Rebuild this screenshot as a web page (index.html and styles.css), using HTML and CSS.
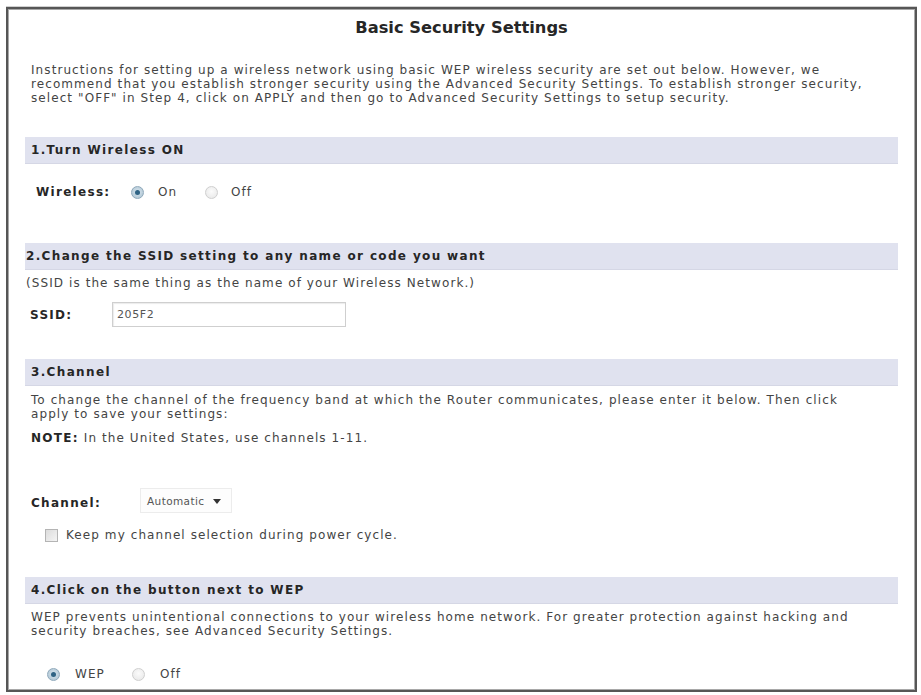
FILE: index.html
```html
<!DOCTYPE html>
<html lang="en">
<head>
<meta charset="utf-8">
<title>Basic Security Settings</title>
<link rel="stylesheet" href="styles.css">
</head>
<body>
<div class="frame">
  <h1 class="title">Basic Security Settings</h1>
  <p class="intro">Instructions for setting up a wireless network using basic WEP wireless security are set out below. However, we<br>recommend that you establish stronger security using the Advanced Security Settings. To establish stronger security,<br>select "OFF" in Step 4, click on APPLY and then go to Advanced Security Settings to setup security.</p>

  <h2 class="bar bar-1">1.Turn Wireless ON</h2>
  <div class="row wireless-row">
    <span class="lbl wireless-lbl">Wireless:</span>
    <label class="opt opt-on"><span class="radio checked"></span><span class="opt-text">On</span></label>
    <label class="opt opt-off"><span class="radio"></span><span class="opt-text">Off</span></label>
  </div>

  <h2 class="bar bar-2 tight">2.Change the SSID setting to any name or code you want</h2>
  <p class="text ssid-note tight">(SSID is the same thing as the name of your Wireless Network.)</p>
  <div class="row ssid-row">
    <span class="lbl ssid-lbl">SSID:</span>
    <div class="field">205F2</div>
  </div>

  <h2 class="bar bar-3">3.Channel</h2>
  <p class="text channel-para">To change the channel of the frequency band at which the Router communicates, please enter it below. Then click<br>apply to save your settings:</p>
  <p class="text note"><b class="bold">NOTE:</b> In the United States, use channels 1-11.</p>
  <div class="row channel-row">
    <span class="lbl channel-lbl">Channel:</span>
    <div class="select"><span class="select-text">Automatic</span><span class="arrow"></span></div>
  </div>
  <label class="row check-row"><span class="checkbox"></span><span class="check-text">Keep my channel selection during power cycle.</span></label>

  <h2 class="bar bar-4">4.Click on the button next to WEP</h2>
  <p class="text wep-para">WEP prevents unintentional connections to your wireless home network. For greater protection against hacking and<br>security breaches, see Advanced Security Settings.</p>
  <div class="row wep-row">
    <label class="opt opt-wep"><span class="radio checked"></span><span class="opt-text">WEP</span></label>
    <label class="opt opt-wepoff"><span class="radio"></span><span class="opt-text">Off</span></label>
  </div>
</div>
</body>
</html>
```

FILE: styles.css
```css
html, body {
  margin: 0;
  padding: 0;
  background: #ffffff;
}

body {
  font-family: "DejaVu Sans", Verdana, sans-serif;
  color: #444444;
  font-size: 12px;
}

.frame {
  box-sizing: border-box;
  margin: 7px 4px 3px 6px;
  height: 685px;
  border: 2px solid #565656;
  box-shadow: inset 0 0 0 1px #a8a8a8, 0 -1px 0 #d0d0d0;
  padding: 0 17px;
  overflow: hidden;
}

.title {
  margin: 9px 0 0;
  font-size: 16.3px;
  line-height: 20px;
  font-weight: bold;
  text-align: center;
  color: #262626;
}

.intro,
.text {
  margin: 0;
  font-size: 12px;
  line-height: 14px;
  letter-spacing: 1.08px;
  white-space: nowrap;
  padding-left: 6px;
}

.intro {
  margin-top: 25px;
}

.bar {
  margin: 0;
  height: 27px;
  line-height: 27px;
  background: #e0e2ef;
  border-bottom: 1px solid #d5d7e5;
  box-sizing: border-box;
  font-size: 12px;
  font-weight: bold;
  letter-spacing: 1.35px;
  color: #262626;
  padding-left: 6px;
  white-space: nowrap;
}

.bar.tight,
.text.tight {
  padding-left: 1px;
}

.bar-1 { margin-top: 32px; }
.bar-2 { margin-top: 41px; }
.bar-3 { margin-top: 32px; }
.bar-4 { margin-top: 35px; }

.lbl,
.bold {
  font-weight: bold;
  letter-spacing: 1.3px;
  color: #262626;
}

.row {
  display: flex;
  align-items: center;
}

/* Step 1 */
.wireless-row {
  margin-top: 18px;
  height: 20px;
  padding-left: 11px;
}

.wireless-lbl {
  width: 95px;
}

.opt {
  display: flex;
  align-items: center;
  letter-spacing: 1.08px;
}

.opt-text {
  margin-left: 14px;
}

.opt-on .opt-text { width: 33px; }
.opt-off { margin-left: 14px; }
.opt-off .opt-text { margin-left: 13px; }

.radio {
  box-sizing: border-box;
  width: 13px;
  height: 13px;
  border-radius: 50%;
  border: 1px solid #cfcfcf;
  background: radial-gradient(circle at 50% 40%, #fbfbfb 0%, #e6e6e6 100%);
  display: flex;
  align-items: center;
  justify-content: center;
  flex: none;
}

.radio.checked {
  border-color: #8fa9bb;
  background: radial-gradient(circle at 50% 45%, #d8e6ef 0%, #a9c0cf 100%);
}

.radio.checked::after {
  content: "";
  width: 5px;
  height: 5px;
  border-radius: 50%;
  background: #2f6384;
}

/* Step 2 */
.ssid-note {
  margin-top: 6px;
}

.ssid-row {
  margin-top: 12px;
  height: 25px;
  padding-left: 5px;
}

.ssid-lbl {
  width: 82px;
}

.field {
  box-sizing: border-box;
  width: 234px;
  height: 25px;
  border: 1px solid #cfcfcf;
  box-shadow: inset 1px 1px 1px #ececec;
  padding: 0 4px;
  line-height: 23px;
  font-size: 11px;
  letter-spacing: 0.6px;
  color: #555;
  background: #fff;
}

/* Step 3 */
.channel-para {
  margin-top: 7px;
}

.note {
  margin-top: 10px;
}

.channel-row {
  margin-top: 43px;
  height: 25px;
  padding-left: 6px;
}

.channel-lbl {
  width: 109px;
  position: relative;
  top: 2px;
}

.select {
  position: relative;
  box-sizing: border-box;
  width: 92px;
  height: 25px;
  border: 1px solid #ececec;
  background: #fdfdfd;
  display: flex;
  align-items: center;
  padding-left: 6px;
}

.select-text {
  font-size: 10.5px;
  letter-spacing: 0.4px;
  color: #555;
}

.arrow {
  position: absolute;
  right: 10px;
  top: 10px;
  width: 0;
  height: 0;
  border-left: 4px solid transparent;
  border-right: 4px solid transparent;
  border-top: 5px solid #333;
}

.check-row {
  margin-top: 15px;
  height: 14px;
  padding-left: 20px;
}

.checkbox {
  box-sizing: border-box;
  width: 13px;
  height: 13px;
  border: 1px solid #b4b4b4;
  background: linear-gradient(135deg, #dcdcdc 0%, #f4f4f4 100%);
  flex: none;
}

.check-text {
  margin-left: 8px;
  letter-spacing: 1.08px;
}

/* Step 4 */
.wep-para {
  margin-top: 6px;
}

.wep-row {
  margin-top: 26px;
  height: 20px;
  padding-left: 22px;
}

.opt-wep .opt-text {
  margin-left: 15px;
  width: 43px;
}

.opt-wepoff {
  margin-left: 14px;
}

.opt-wepoff .opt-text {
  margin-left: 15px;
}
```
